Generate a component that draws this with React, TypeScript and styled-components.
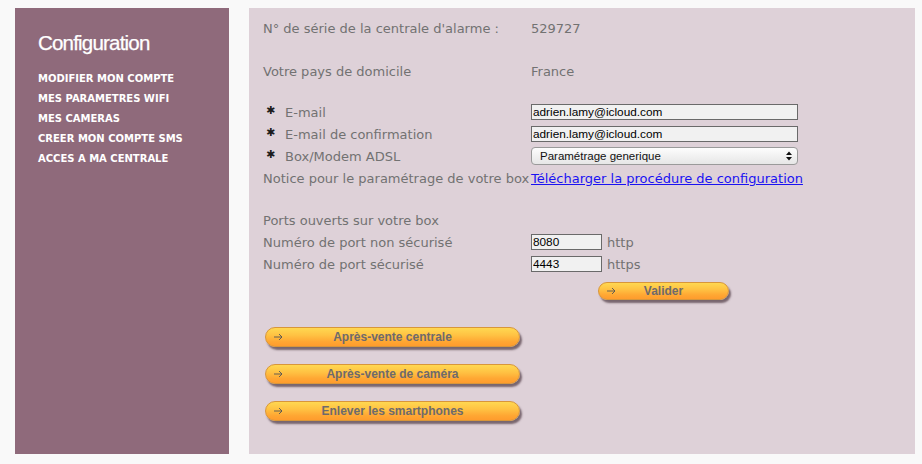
import React from "react";
import styled, { createGlobalStyle } from "styled-components";

const GlobalStyle = createGlobalStyle`
  html, body { margin: 0; padding: 0; background: #f9f9f9; }
  body { font-family: "DejaVu Sans", Verdana, sans-serif; }
`;

const Page = styled.div`
  display: flex;
  gap: 20px;
  padding: 8px 0 0 15px;
`;

const Sidebar = styled.nav`
  width: 214px;
  height: 446px;
  background: #8f6a7b;
  box-sizing: border-box;
  padding: 22px 0 0 23px;
`;

const Title = styled.h1`
  margin: 0 0 13px;
  font-family: "Liberation Sans", Arial, sans-serif;
  font-weight: normal;
  font-size: 20.5px;
  letter-spacing: -0.8px;
  line-height: 26px;
  color: #ffffff;
  -webkit-text-stroke: 0.25px #ffffff;
`;

const Menu = styled.ul`
  list-style: none;
  margin: 0;
  padding: 0;
  display: flex;
  flex-direction: column;
`;

const MenuItem = styled.li`
  font-family: "DejaVu Sans", Verdana, sans-serif;
  font-weight: bold;
  font-size: 10px;
  line-height: 20px;
  color: #ffffff;
`;

const Main = styled.main`
  width: 666px;
  height: 446px;
  background: #ded1d8;
  box-sizing: border-box;
  padding: 9px 0 0 14px;
  color: #727272;
  font-size: 13px;
`;

const Row = styled.div`
  display: flex;
  align-items: center;
  height: 22px;
`;

const Label = styled.div`
  width: 268px;
  flex: none;
  display: flex;
  align-items: center;
  white-space: nowrap;
`;

const Star = styled.span`
  font-family: "DejaVu Sans", sans-serif;
  font-size: 11px;
  color: #1c1c1c;
  width: 22px;
  padding-left: 3px;
  box-sizing: border-box;
  line-height: 12px;
  margin-top: -2px;
`;

const Value = styled.div`
  display: flex;
  align-items: center;
  white-space: nowrap;
`;

const Spacer = styled.div<{ $h: number }>`
  height: ${(p) => p.$h}px;
`;

const TextInput = styled.input<{ $w: number }>`
  width: ${(p) => p.$w}px;
  height: 16px;
  box-sizing: border-box;
  border: 1px solid #6a6a6a;
  background: #f1f1f1;
  padding: 0 1px;
  margin: 0;
  font-family: "Liberation Sans", Arial, sans-serif;
  font-size: 11.8px;
  color: #000;
  outline: none;
`;

const SelectBox = styled.div`
  width: 267px;
  height: 18px;
  box-sizing: border-box;
  border: 1px solid #9a9a9a;
  border-radius: 4px;
  background: linear-gradient(#fdfdfd, #e6e6e6);
  font-family: "Liberation Sans", Arial, sans-serif;
  font-size: 11.5px;
  color: #111;
  display: flex;
  align-items: center;
  justify-content: space-between;
  padding: 0 5px 0 8px;
`;

const Link = styled.a`
  color: #1a13f2;
  text-decoration: underline;
  cursor: pointer;
`;

const Unit = styled.span`
  margin-left: 5px;
`;

const ValiderRow = styled.div`
  margin: 7px 0 0 335px;
`;

const BigButtons = styled.div`
  display: flex;
  flex-direction: column;
  gap: 17px;
  margin: 27px 0 0 2px;
`;

const OrangeButton = styled.button<{ $w: number; $h: number }>`
  position: relative;
  width: ${(p) => p.$w}px;
  height: ${(p) => p.$h}px;
  box-sizing: border-box;
  border: 1px solid #d8963a;
  border-radius: ${(p) => p.$h / 2}px;
  background: linear-gradient(#ffd851 0%, #ffc243 40%, #ffa733 75%, #ff9c2d 100%);
  box-shadow: 2px 3px 2px rgba(85, 65, 75, 0.75);
  font-family: "Liberation Sans", Arial, sans-serif;
  font-weight: bold;
  font-size: 12px;
  color: #6e6a6c;
  padding: 0;
  margin: 0;
  display: flex;
  align-items: center;
  justify-content: center;
  cursor: pointer;
`;

const ArrowWrap = styled.span`
  position: absolute;
  left: 8px;
  top: 50%;
  margin-top: -4px;
  display: flex;
`;

const Arrow = () => (
  <ArrowWrap>
    <svg width="9" height="8" viewBox="0 0 9 8">
      <path d="M0 4h8M5 1l3 3-3 3" stroke="#555" strokeWidth="0.9" fill="none" />
    </svg>
  </ArrowWrap>
);

const Button: React.FC<{ w: number; h: number; children: React.ReactNode }> = ({ w, h, children }) => (
  <OrangeButton $w={w} $h={h}>
    <Arrow />
    {children}
  </OrangeButton>
);

const SelectArrows = () => (
  <svg width="6" height="10" viewBox="0 0 6 10">
    <path d="M0 4L3 0.5 6 4z M0 6l3 3.5 3-3.5z" fill="#111" />
  </svg>
);

export default function App() {
  return (
    <>
      <GlobalStyle />
      <Page>
        <Sidebar>
          <Title>Configuration</Title>
          <Menu>
            <MenuItem>MODIFIER MON COMPTE</MenuItem>
            <MenuItem>MES PARAMETRES WIFI</MenuItem>
            <MenuItem>MES CAMERAS</MenuItem>
            <MenuItem>CREER MON COMPTE SMS</MenuItem>
            <MenuItem>ACCES A MA CENTRALE</MenuItem>
          </Menu>
        </Sidebar>
        <Main>
          <Row>
            <Label>N° de série de la centrale d'alarme :</Label>
            <Value>529727</Value>
          </Row>
          <Spacer $h={21} />
          <Row>
            <Label>Votre pays de domicile</Label>
            <Value>France</Value>
          </Row>
          <Spacer $h={19} />
          <Row>
            <Label>
              <Star>✱</Star>E-mail
            </Label>
            <Value>
              <TextInput $w={267} defaultValue="adrien.lamy@icloud.com" />
            </Value>
          </Row>
          <Row>
            <Label>
              <Star>✱</Star>E-mail de confirmation
            </Label>
            <Value>
              <TextInput $w={267} defaultValue="adrien.lamy@icloud.com" />
            </Value>
          </Row>
          <Row>
            <Label>
              <Star>✱</Star>Box/Modem ADSL
            </Label>
            <Value>
              <SelectBox>
                <span>Paramétrage generique</span>
                <SelectArrows />
              </SelectBox>
            </Value>
          </Row>
          <Row>
            <Label>Notice pour le paramétrage de votre box</Label>
            <Value>
              <Link>Télécharger la procédure de configuration</Link>
            </Value>
          </Row>
          <Spacer $h={20} />
          <Row>
            <Label>Ports ouverts sur votre box</Label>
          </Row>
          <Row>
            <Label>Numéro de port non sécurisé</Label>
            <Value>
              <TextInput $w={71} defaultValue="8080" />
              <Unit>http</Unit>
            </Value>
          </Row>
          <Row>
            <Label>Numéro de port sécurisé</Label>
            <Value>
              <TextInput $w={71} defaultValue="4443" />
              <Unit>https</Unit>
            </Value>
          </Row>
          <ValiderRow>
            <Button w={131} h={18}>Valider</Button>
          </ValiderRow>
          <BigButtons>
            <Button w={255} h={20}>Après-vente centrale</Button>
            <Button w={255} h={20}>Après-vente de caméra</Button>
            <Button w={255} h={20}>Enlever les smartphones</Button>
          </BigButtons>
        </Main>
      </Page>
    </>
  );
}
